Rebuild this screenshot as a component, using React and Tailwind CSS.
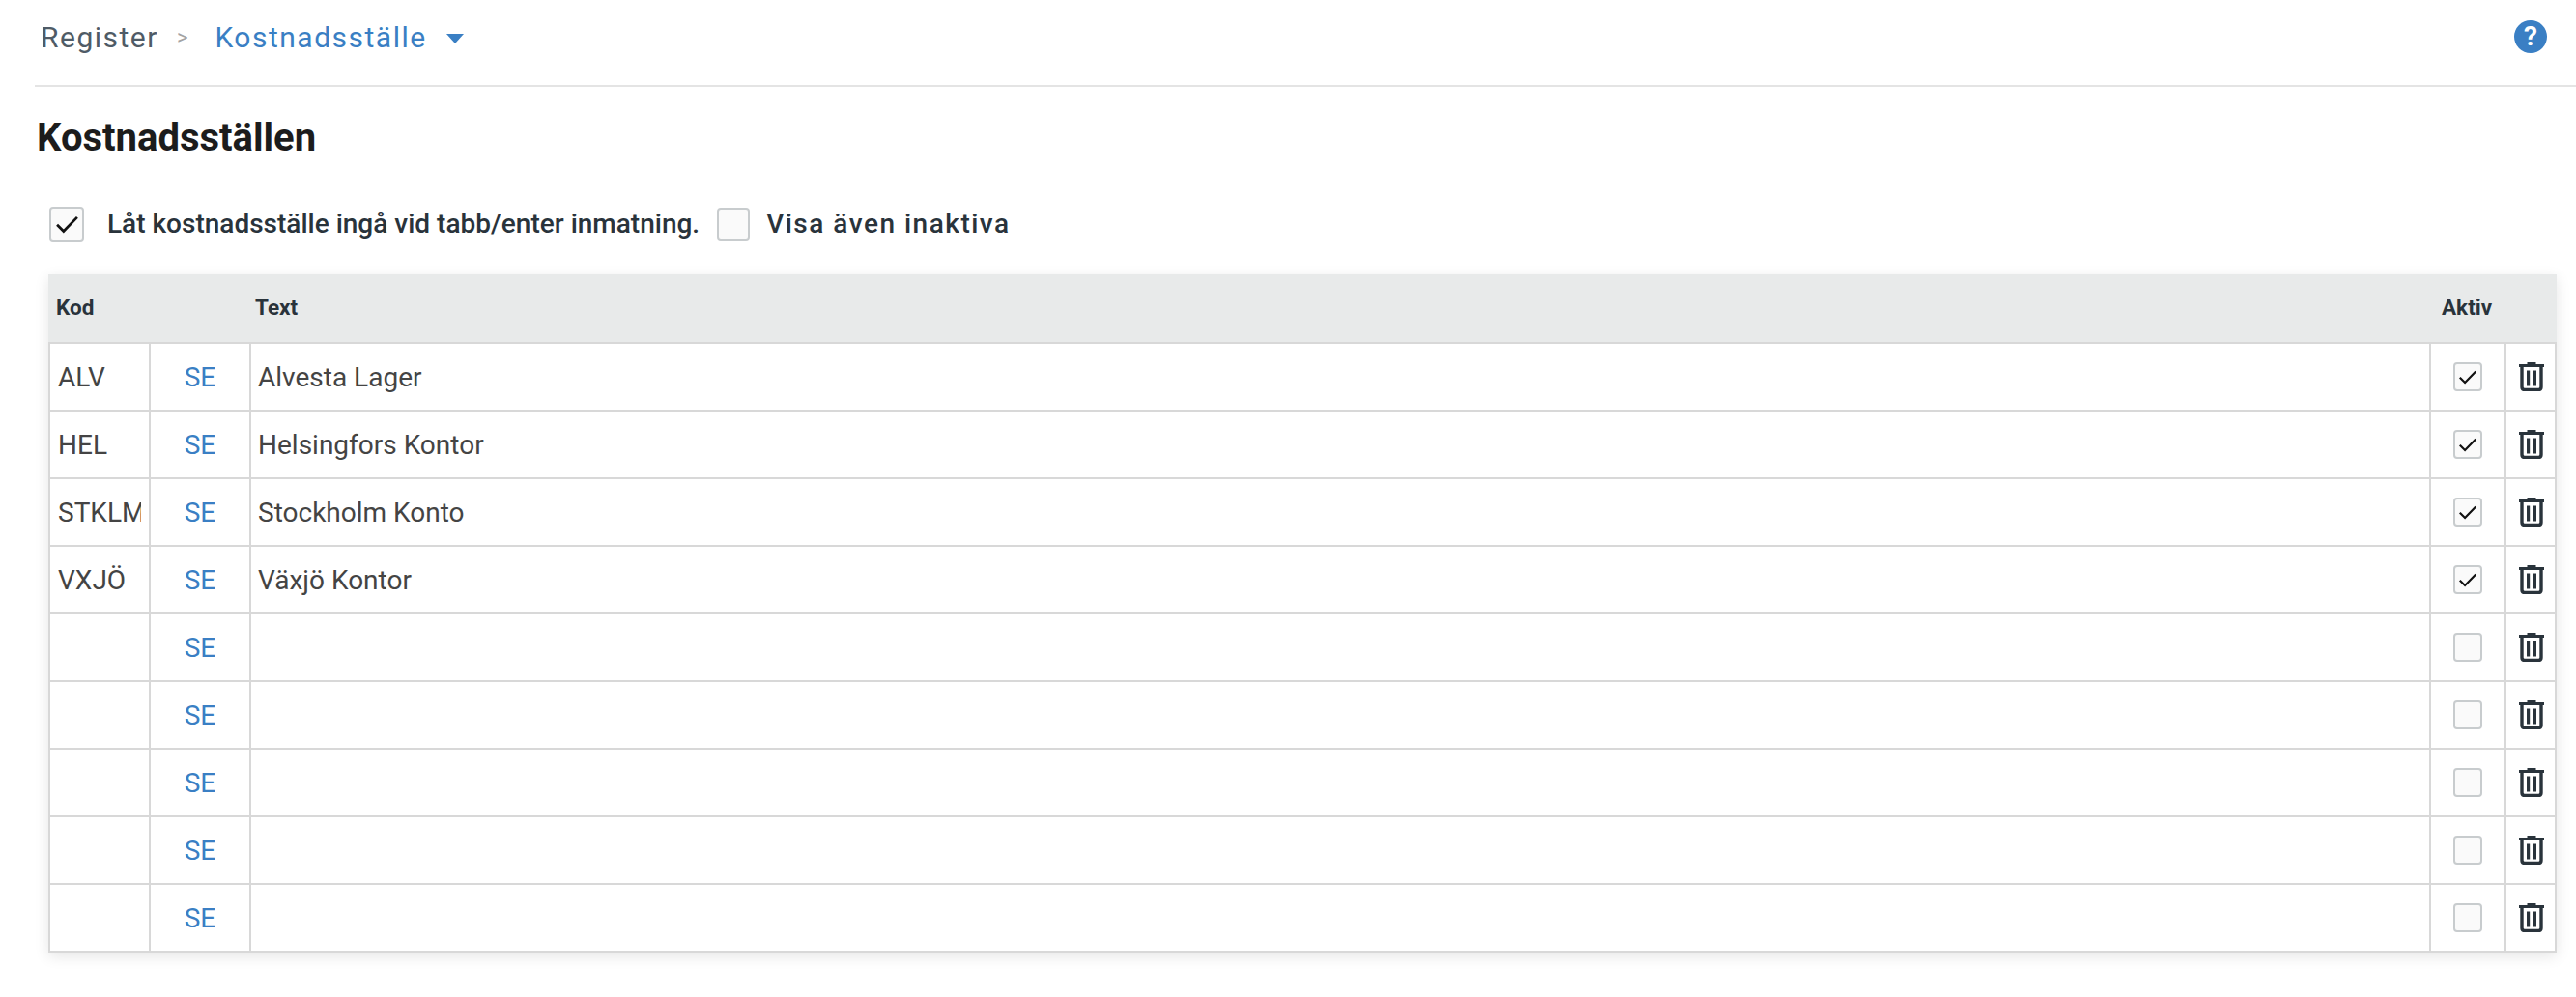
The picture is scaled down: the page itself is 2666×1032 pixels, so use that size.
const rows = [
  ["ALV", "Alvesta Lager", true],
  ["HEL", "Helsingfors Kontor", true],
  ["STKLM", "Stockholm Konto", true],
  ["VXJÖ", "Växjö Kontor", true],
  ["", "", false],
  ["", "", false],
  ["", "", false],
  ["", "", false],
  ["", "", false],
];

function Check({ on, big, className }) {
  return (
    <span className={"flex items-center justify-center rounded-[4px] border-2 border-[#c8ccce] bg-[#fafafa] shrink-0 " + className}>
      {on && (
        <svg width={big ? 25 : 20} height={big ? 19 : 15} viewBox="0 0 20 15.500" fill="none">
          <path d="M1.500 8L7 13.500L18.500 1.500" stroke="#111" strokeWidth="2.200" />
        </svg>
      )}
    </span>
  );
}

function Trash() {
  return (
    <svg width="26" height="30" viewBox="0 0 26 30" fill="none">
      <path d="M8.500 0H17.500V2H26V5H0V2H8.500Z" fill="#29333b" />
      <path d="M3 5V25.500C3 27.500 4.300 28.500 6 28.500H20C21.700 28.500 23 27.500 23 25.500V5" stroke="#29333b" strokeWidth="3.400" />
      <rect x="8" y="8.500" width="3.200" height="16" fill="#29333b" />
      <rect x="14.800" y="8.500" width="3.200" height="16" fill="#29333b" />
    </svg>
  );
}

export default function App() {
  return (
    <div className="h-[1032px] bg-white overflow-hidden font-['Roboto',sans-serif] text-[#29333b]">
      <header className="ml-[36px] h-[90px] border-b-2 border-[#e4e4e4] flex items-center pb-[11px]">
        <span className="ml-[6px] text-[30px] tracking-[1.5px] text-[#4f5b66]">Register</span>
        <span className="ml-[19px] text-[22px] text-[#a3a3a3]">&gt;</span>
        <span className="ml-[28px] text-[30px] tracking-[1.5px] text-[#3a7fc4]">Kostnadsställe</span>
        <span className="ml-[20px] mt-[2px] w-0 h-0 border-x-[9px] border-x-transparent border-t-[10px] border-t-[#3a7fc4]"></span>
        <span className="ml-auto mr-[30px] mb-[2px] w-[34px] h-[34px] rounded-full bg-[#3a7fc4] flex items-center justify-center text-white text-[28px] font-bold leading-none">?</span>
      </header>

      <h1 className="ml-[38px] mt-[28px] text-[40px] leading-[50px] font-bold text-[#1c1c1c]">Kostnadsställen</h1>

      <div className="ml-[51px] mt-[46px] h-[36px] flex items-center">
        <Check on big className="w-[36px] h-[36px]" />
        <span className="ml-[24px] text-[28px] font-medium">Låt kostnadsställe ingå vid tabb/enter inmatning.</span>
        <Check className="ml-[18px] w-[34px] h-[34px]" />
        <span className="ml-[17px] text-[28px] font-medium tracking-[1.5px]">Visa även inaktiva</span>
      </div>

      <div className="ml-[50px] mt-[34px] w-[2596px] shadow-[0_4px_14px_rgba(0,0,0,0.1)]">
        <div className="h-[72px] bg-[#e8eaea] border-b-2 border-[#d8d8d8] grid grid-cols-[106px_106px_2256px_78px_1fr] items-center text-[22.5px] font-bold">
          <span className="pl-[8px]">Kod</span>
          <span></span>
          <span className="pl-[2px]">Text</span>
          <span className="col-span-2 pl-[9px]">Aktiv</span>
        </div>
        <div className="border-x-2 border-b-2 border-[#d8d8d8]">
          {rows.map(([kod, text, on], i) => (
            <div
              key={i}
              className="h-[70px] last:h-[68px] grid grid-cols-[104px_104px_2256px_78px_1fr] items-stretch text-[28px] text-[#444444] border-b-2 last:border-b-0 border-[#d8d8d8]"
            >
              <div className="border-r-2 border-[#d8d8d8] pl-[8px] pr-[8px] pt-[1px] flex items-center">
                <div className="overflow-hidden whitespace-nowrap">{kod}</div>
              </div>
              <div className="border-r-2 border-[#d8d8d8] pt-[1px] flex items-center justify-center text-[#3a7fc4]">SE</div>
              <div className="border-r-2 border-[#d8d8d8] pl-[7px] pt-[1px] flex items-center">{text}</div>
              <div className="border-r-2 border-[#d8d8d8] flex items-center justify-center"><Check on={on} className="w-[30px] h-[30px]" /></div>
              <div className="pl-[1px] flex items-center justify-center"><Trash /></div>
            </div>
          ))}
        </div>
      </div>
    </div>
  );
}
